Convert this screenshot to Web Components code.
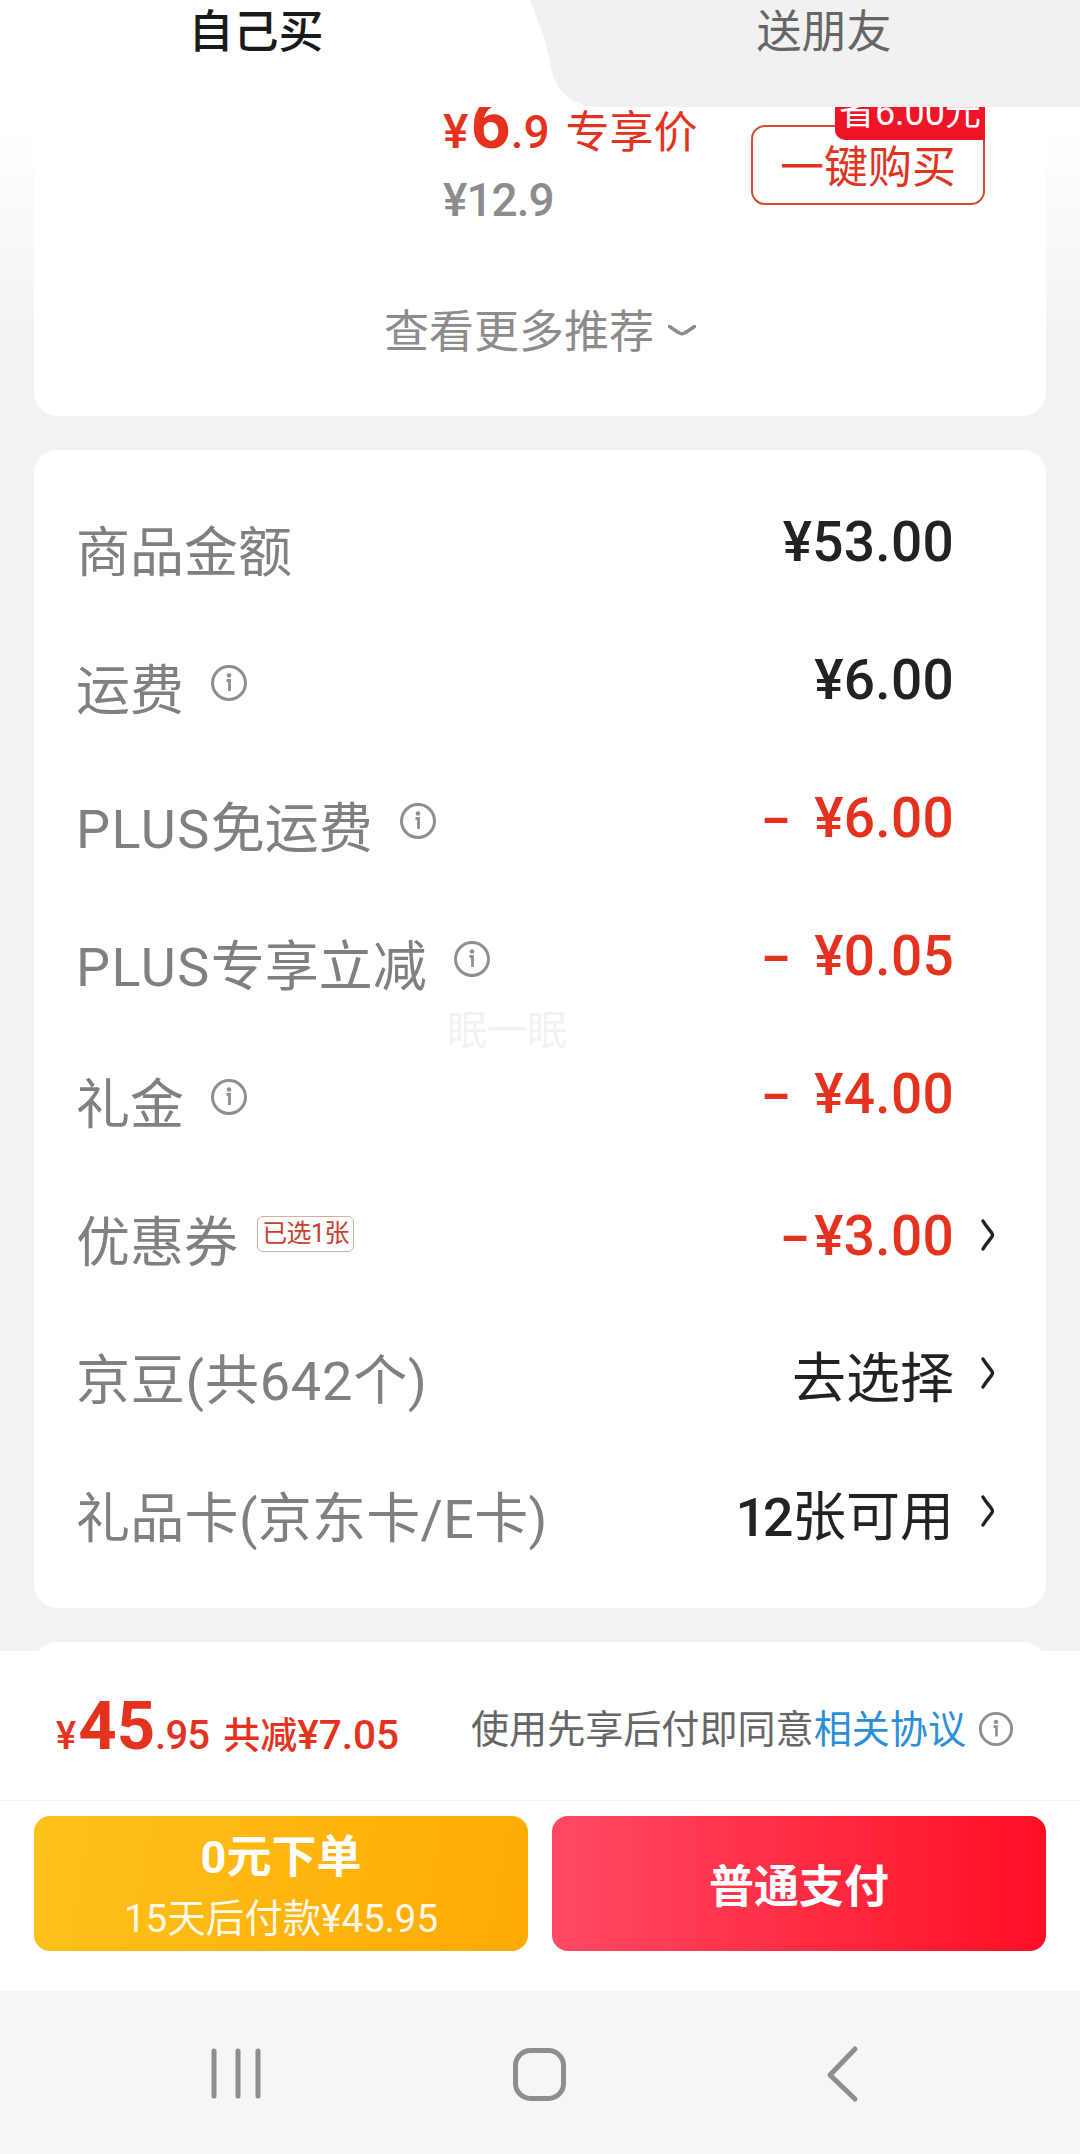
<!DOCTYPE html>
<html lang="zh"><head><meta charset="utf-8"><title>确认订单</title>
<style>
html,body{margin:0;padding:0;background:#f2f2f2}
body{width:1080px;height:2154px;overflow:hidden;font-family:Roboto,"Noto Sans CJK SC",sans-serif;-webkit-font-smoothing:antialiased}
</style></head><body>
<checkout-page></checkout-page>
<script>
const INFO=(s=38)=>`<svg width="${s}" height="${s}" viewBox="0 0 38 38" fill="none"><circle cx="19" cy="19" r="16.5" stroke="#8f8f8f" stroke-width="3"/><circle cx="19" cy="11.5" r="2.3" fill="#8f8f8f"/><path d="M16.5 16.5H19.5V27" stroke="#8f8f8f" stroke-width="2.8"/></svg>`;
function def(name,css,html){
  customElements.define(name,class extends HTMLElement{
    connectedCallback(){
      if(this.shadowRoot)return;
      const r=this.attachShadow({mode:'open'});
      r.innerHTML=`<style>${css}</style>${typeof html==='function'?html(this):html}`;
    }
  });
}
def('order-tabs',`
:host{display:block;position:relative;z-index:3;height:107px;background:#fff}
.t{position:absolute;top:0;height:66px;line-height:66px;font-size:45px;width:200px;text-align:center}
.a{left:156px;color:#1a1a1a;font-weight:500}
.b{left:724px;color:#666}
svg{position:absolute;left:0;top:0}
`,`<svg width="1080" height="107"><path d="M530 0H1080V107H600C572 107 556 92 551 68L545 40Z" fill="#f1f1f1"/></svg>
<div class="t a">自己买</div><div class="t b">送朋友</div>`);
def('money-text',`
:host{display:inline-block;font-family:Roboto,"Noto Sans CJK SC",sans-serif;font-weight:500;font-size:55px;line-height:60px;white-space:nowrap;letter-spacing:.3px}
`,`<slot></slot>`);
def('recommend-card',`
:host{display:block;background:#fff;margin:-40px 34px 0;height:349px;border-radius:0 0 24px 24px;box-sizing:border-box;padding:25px 0 0}
.item{display:flex;justify-content:space-between;height:218px;margin:0 61px 0 409px}
.price{color:#e4321e;font-size:44px;line-height:64px;height:64px;display:flex;align-items:baseline;white-space:nowrap}
.y{font-size:48px;font-weight:500}.big{font-size:70px;font-weight:700;margin-left:2px}.dec{font-size:46px;font-weight:500;margin-right:16px}
.old{color:#8c8c8c;font-size:46px;font-weight:500;line-height:56px;margin-top:16px;letter-spacing:-1px}
.buy{position:relative;box-sizing:border-box;width:234px;height:80px;margin-top:33px;border:2px solid #d44a35;border-radius:14px;color:#e0341f;font-size:44px;line-height:83px;text-align:center}
.tag{position:absolute;right:-2px;top:-35px;width:150px;height:48px;background:#f01428;border-radius:0 0 0 10px;color:#fff;font-size:36px;line-height:42px;text-align:center;white-space:nowrap}
.more{display:flex;align-items:center;justify-content:center;gap:14px;color:#8c8c8c;font-size:45px;line-height:60px;margin-top:-7px}
svg{margin-top:-6px}
`,`<div class="item"><div><div class="price"><span class="y">¥</span><span class="big">6</span><span class="dec">.9</span><span>专享价</span></div><div class="old">¥12.9</div></div>
<div class="buy">一键购买<div class="tag">省6.00元</div></div></div>
<div class="more"><span>查看更多推荐</span><svg width="28" height="11" viewBox="0 0 28 11" fill="none"><path d="M1.5 1.5C8 5.5 11 8.8 14 8.8S20 5.5 26.5 1.5" stroke="#8c8c8c" stroke-width="3.6" stroke-linecap="round"/></svg></div>`);
def('fee-row',`
:host{display:flex;align-items:center;height:138px;padding:0 51px 0 42px;font-size:54px;color:#808080;white-space:nowrap}
.l{line-height:70px;padding-top:7px}
.info{display:flex;margin:0 0 10px 26px}
.sp{flex:1}
.v{color:#222;font-size:54px;line-height:70px}
:host([tone=red]) .v{color:#e4321e}
.ch{width:14px;height:32px;margin-left:27px;margin-bottom:11px;display:block}
`,h=>{
  const lift=+(h.getAttribute('lift')||0);
  const pad=lift>=0?`padding-bottom:${lift}px`:`padding-top:${-lift}px`;
  return `<span class="l"><slot name="label"></slot></span>`+
  (h.hasAttribute('info')?`<span class="info">${INFO()}</span>`:'')+
  `<slot name="extra"></slot><span class="sp"></span><span class="v" style="${pad}"><slot></slot></span>`+
  (h.hasAttribute('arrow')?`<svg class="ch" viewBox="0 0 14 32" fill="none"><path d="M2 2C6 9 11.5 13.5 11.5 16S6 23 2 30" stroke="#222" stroke-width="3.4" stroke-linecap="round"/></svg>`:`<span class="ch"></span>`);
});
def('minus-sign',`
:host{display:inline-block;transform:scaleX(1.6);margin-right:28px}
:host([tight]){margin-right:9px}
`,`<slot></slot>`);
def('coupon-tag',`
:host{display:block;box-sizing:border-box;width:97px;height:36px;margin:0 0 12px 19px;border:1px solid #dcaaa0;border-radius:6px;color:#c8412f;font-size:25px;line-height:33px;text-align:center;white-space:nowrap;letter-spacing:-.6px}
`,`<slot></slot>`);
def('white-card',`
:host{display:block;background:#fff;margin:34px 34px 0;border-radius:24px;position:relative}
`,`<slot></slot>`);
def('price-bar',`
:host{display:flex;align-items:center;box-sizing:border-box;height:150px;padding:0 66px 0 56px;background:#fff;border-bottom:1px solid #f2f2f2;white-space:nowrap;color:#e4321e}
.total{display:flex;align-items:baseline;font-weight:500}
.y{font-size:38px}.big{font-size:67px;font-weight:700;margin-left:2px}.dec{font-size:40px;letter-spacing:-.8px}
.save{font-size:37px;margin-left:14px}
.n{font-size:40.5px;font-weight:500}
.sp{flex:1}
.agree{font-size:38.1px;color:#666;line-height:50px;padding-top:8px}
a{color:#2a8fd8;text-decoration:none}
.i{display:flex;margin:6px 0 0 12px}
`,`<div class="total"><span class="y">¥</span><span class="big">45</span><span class="dec">.95</span><span class="save">共减<span class="n">¥7.05</span></span></div><span class="sp"></span><span class="agree">使用先享后付即同意<a>相关协议</a></span><span class="i">${INFO(36)}</span>`);
def('pay-buttons',`
:host{display:flex;gap:24px;padding:15px 34px 40px;background:#fff}
.b{flex:1;height:135px;border-radius:16px;color:#fff;text-align:center;display:flex;flex-direction:column;justify-content:center;white-space:nowrap}
.y{background:linear-gradient(100deg,#fdc21a,#ffaa05)}
.r{background:linear-gradient(90deg,#ff4a63,#ff0f24)}
.m{font-size:45px;font-weight:700;line-height:62px;padding-top:4px}
.r .m{padding-top:9px}
.s{font-size:38.5px;line-height:50px;margin-top:5px;color:rgba(255,255,255,.92)}
`,`<div class="b y"><div class="m">0元下单</div><div class="s">15天后付款¥45.95</div></div><div class="b r"><div class="m">普通支付</div></div>`);
def('nav-bar',`
:host{display:block;height:163px;background:#f6f6f6}
svg{display:block}
`,`<svg width="1080" height="163" fill="none" stroke="#8e8e8e" stroke-linecap="round"><g stroke-width="5"><path d="M214 60V105M238 60V105M258 60V105"/><rect x="515.5" y="59.5" width="48" height="48" rx="15"/><path d="M855 58L830 84L855 108" stroke-linejoin="round"/></g></svg>`);
def('checkout-page',`
:host{display:flex;flex-direction:column;width:1080px;height:2154px;overflow:hidden;background:#f2f2f2}
.main{height:1544px;overflow:hidden;position:relative;background:linear-gradient(#fff 0,#fff 20px,#f2f2f2 240px)}
.water{position:absolute;left:447px;top:900px;width:120px;font-size:40px;line-height:48px;color:#f2f2f2;white-space:nowrap}
`,`<order-tabs></order-tabs>
<div class="main">
<recommend-card></recommend-card>
<white-card style="height:1158px;padding-top:31px;box-sizing:border-box">
<fee-row lift="15"><span slot="label">商品金额</span><money-text>¥53.00</money-text></fee-row>
<fee-row info lift="15"><span slot="label">运费</span><money-text>¥6.00</money-text></fee-row>
<fee-row info lift="15" tone="red"><span slot="label"><span style="letter-spacing:1.5px">PLUS</span>免运费</span><money-text><minus-sign>-</minus-sign>¥6.00</money-text></fee-row>
<fee-row info lift="15" tone="red"><span slot="label"><span style="letter-spacing:1.5px">PLUS</span>专享立减</span><money-text><minus-sign>-</minus-sign>¥0.05</money-text></fee-row>
<fee-row info lift="15" tone="red"><span slot="label">礼金</span><money-text><minus-sign>-</minus-sign>¥4.00</money-text></fee-row>
<fee-row arrow lift="6" tone="red"><span slot="label">优惠券</span><coupon-tag slot="extra">已选1张</coupon-tag><money-text><minus-sign tight>-</minus-sign>¥3.00</money-text></fee-row>
<fee-row arrow lift="-4"><span slot="label" style="letter-spacing:.8px">京豆(共642个)</span>去选择</fee-row>
<fee-row arrow lift="-4"><span slot="label" style="letter-spacing:.3px">礼品卡(京东卡/E卡)</span><span style="font-weight:500;letter-spacing:-3.5px;margin-right:2px">12</span>张可用</fee-row>
</white-card>
<white-card style="height:60px"></white-card>
<div class="water">眠一眠</div>
</div>
<price-bar></price-bar>
<pay-buttons></pay-buttons>
<nav-bar></nav-bar>`);
</script>
</body></html>
